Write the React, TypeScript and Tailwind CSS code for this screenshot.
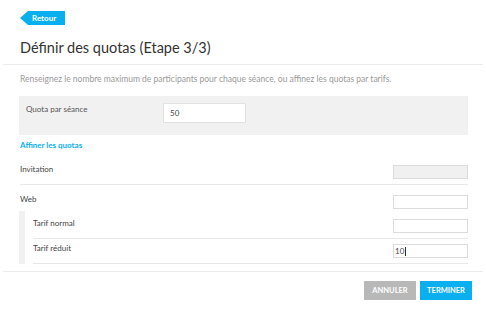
import React from "react";

const font = { fontFamily: "Lato, 'Open Sans', sans-serif" };

const QuotaInput = ({ value = "", disabled = false }: { value?: string; disabled?: boolean }) => (
    <div
        className={`w-[75px] h-[14px] border border-[#dcdcdc] text-[8px] leading-[12px] pl-[1px] text-[#444] ${disabled ? "bg-[#f0f0f0]" : "bg-white"}`}
    >
        {value}
        {value && <span className="inline-block w-px h-[9px] bg-[#333] align-middle ml-px" />}
    </div>
);

const App = () => {
    return (
        <div className="w-[486px] h-[310px] bg-white overflow-hidden" style={font}>
            <div className="px-[20px] pt-[11px]">
                <div className="flex items-center h-[14px]">
                    <div className="w-0 h-0 border-y-[7px] border-y-transparent border-r-[8px] border-r-[#0aaff0]" />
                    <div className="h-[14px] bg-[#0aaff0] text-white text-[8px] font-bold leading-[14px] pl-[4px] pr-[9px]">
                        Retour
                    </div>
                </div>
                <h1 className="mt-[14px] text-[14.5px] leading-[18px] text-[#333] font-normal">Définir des quotas (Etape 3/3)</h1>
            </div>
            <div className="mx-[3px] mt-[7px] h-px bg-[#ececec]" />

            <div className="px-[20px]">
                <p className="mt-[8px] text-[8.5px] leading-[12px] text-[#9a9a9a]">
                    Renseignez le nombre maximum de participants pour chaque séance, ou affinez les quotas par tarifs.
                </p>

                <div className="mt-[11px] -ml-px w-[449px] h-[39px] bg-[#f1f1f1] flex items-start pl-[7px] pt-[7px]">
                    <span className="w-[137px] text-[8px] leading-[10px] text-[#555] pt-[1px]">Quota par séance</span>
                    <div className="w-[83px] h-[20px] bg-white border border-[#e2e2e2] text-[8px] leading-[18px] pl-[6px] text-[#444]">
                        50
                    </div>
                </div>

                <div className="mt-[5px] text-[8px] leading-[10px] font-bold text-[#0aaff0]">Affiner les quotas</div>

                <div className="w-[448px] mt-[13px]">
                    <div className="flex items-start justify-between h-[22px] border-b border-[#e8e8e8]">
                        <span className="text-[8px] leading-[10px] pt-[1px] text-[#444]">Invitation</span>
                        <div className="mt-[2px]">
                            <QuotaInput disabled />
                        </div>
                    </div>
                    <div className="flex items-start justify-between h-[26px]">
                        <span className="text-[8px] leading-[10px] pt-[9px] text-[#444]">Web</span>
                        <div className="mt-[10px]">
                            <QuotaInput />
                        </div>
                    </div>
                    <div className="flex">
                        <div className="-ml-px w-[6px] h-[53px] bg-[#f1f1f1]" />
                        <div className="flex-1 ml-[8px]">
                            <div className="flex items-start justify-between h-[28px] border-b border-[#e8e8e8]">
                                <span className="text-[8px] leading-[10px] pt-[7px] text-[#444]">Tarif normal</span>
                                <div className="mt-[8px]">
                                    <QuotaInput />
                                </div>
                            </div>
                            <div className="flex items-start justify-between h-[25px] border-b border-[#e8e8e8]">
                                <span className="text-[8px] leading-[10px] pt-[4px] text-[#444]">Tarif réduit</span>
                                <div className="mt-[5px]">
                                    <QuotaInput value="10" />
                                </div>
                            </div>
                        </div>
                    </div>
                </div>
            </div>

            <div className="mx-[3px] mt-[7px] h-px bg-[#ececec]" />
            <div className="flex justify-end gap-[4px] pr-[14px] mt-[9px]">
                <button className="w-[52px] h-[19px] bg-[#b8b8b8] text-white text-[7.5px] font-bold">ANNULER</button>
                <button className="w-[52px] h-[19px] bg-[#0aaff0] text-white text-[7.5px] font-bold">TERMINER</button>
            </div>
        </div>
    );
};

export default App;
